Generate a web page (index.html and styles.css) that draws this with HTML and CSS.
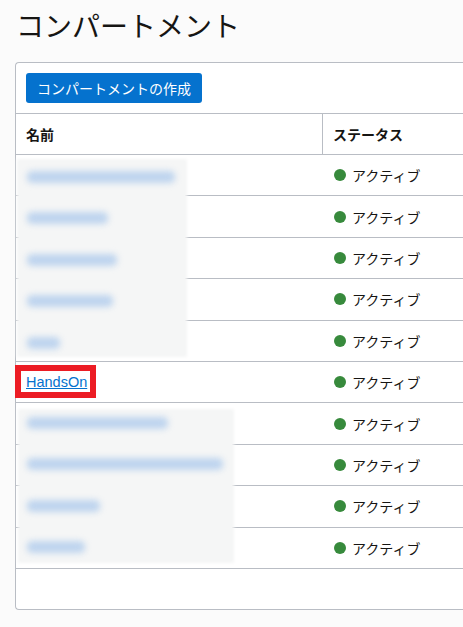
FILE: index.html
```html
<!DOCTYPE html>
<html lang="ja">
<head>
<meta charset="utf-8">
<title>コンパートメント</title>
<link rel="stylesheet" href="styles.css">
</head>
<body>
<div class="page">
  <h1 class="title">コンパートメント</h1>
  <div class="card">
    <div class="toolbar">
      <button class="btn">コンパートメントの作成</button>
    </div>
    <div class="table">
      <div class="thead">
        <div class="th th-name">名前</div>
        <div class="th th-status">ステータス</div>
      </div>
      <div class="row"><div class="name"></div><div class="status"><span class="dot"></span>アクティブ</div></div>
      <div class="row"><div class="name"></div><div class="status"><span class="dot"></span>アクティブ</div></div>
      <div class="row"><div class="name"></div><div class="status"><span class="dot"></span>アクティブ</div></div>
      <div class="row"><div class="name"></div><div class="status"><span class="dot"></span>アクティブ</div></div>
      <div class="row"><div class="name"></div><div class="status"><span class="dot"></span>アクティブ</div></div>
      <div class="row"><div class="name"><a class="link marked" href="#">HandsOn</a></div><div class="status"><span class="dot"></span>アクティブ</div></div>
      <div class="row"><div class="name"></div><div class="status"><span class="dot"></span>アクティブ</div></div>
      <div class="row"><div class="name"></div><div class="status"><span class="dot"></span>アクティブ</div></div>
      <div class="row"><div class="name"></div><div class="status"><span class="dot"></span>アクティブ</div></div>
      <div class="row"><div class="name"></div><div class="status"><span class="dot"></span>アクティブ</div></div>
      <div class="tfoot"></div>
    </div>
    <div class="mask mask-a">
      <span class="blur" style="width:148px"></span>
      <span class="blur" style="width:81px"></span>
      <span class="blur" style="width:90px"></span>
      <span class="blur" style="width:86px"></span>
      <span class="blur" style="width:33px"></span>
    </div>
    <div class="mask mask-b">
      <span class="blur" style="width:141px"></span>
      <span class="blur" style="width:196px"></span>
      <span class="blur" style="width:73px"></span>
      <span class="blur" style="width:58px"></span>
    </div>
  </div>
</div>
</body>
</html>
```
FILE: styles.css
```css
html, body {
  margin: 0;
  padding: 0;
}
body {
  background: #fbfbfb;
  overflow: hidden;
  font-family: "Noto Sans CJK JP", "Noto Sans", sans-serif;
  color: #161513;
}
.page {
  padding-left: 15px;
}
.title {
  margin: 0;
  padding: 5px 0 0 1px;
  font-size: 28px;
  line-height: 40px;
  font-weight: 400;
  color: #161513;
}
.card {
  position: relative;
  margin-top: 17px;
  background: #fff;
  border: 1px solid #b9bdc4;
  border-right: none;
  border-radius: 4px 0 0 4px;
}
.toolbar {
  padding: 10px;
  display: flex;
}
.btn {
  height: 30px;
  padding: 0 11px;
  border: none;
  border-radius: 3px;
  background: #0572ce;
  color: #fff;
  font-family: "Noto Sans CJK JP", sans-serif;
  font-size: 14px;
  line-height: 30px;
}
.table {
  border-top: 1px solid #b9bdc4;
}
.thead {
  display: flex;
  height: 40px;
  border-bottom: 1px solid #b9bdc4;
}
.th {
  display: flex;
  align-items: center;
  font-size: 14px;
  font-weight: 700;
}
.th-name {
  width: 296px;
  padding-left: 10px;
  border-right: 1px solid #b9bdc4;
}
.th-status {
  padding-left: 10px;
}
.row {
  display: flex;
  align-items: center;
  height: 40.4px;
  border-bottom: 1px solid #b9bdc4;
}
.name {
  width: 296px;
  padding-left: 10px;
  display: flex;
  align-items: center;
}
.status {
  display: flex;
  align-items: center;
  padding-left: 12px;
  font-size: 14px;
  line-height: 20px;
}
.dot {
  width: 12px;
  height: 12px;
  border-radius: 50%;
  background: #378a3c;
  margin-right: 6px;
}
.link {
  font-family: "Liberation Sans", Arial, sans-serif;
  font-size: 14.5px;
  line-height: 17px;
  color: #0572ce;
  text-decoration: underline;
}
.marked {
  position: relative;
  display: inline-block;
}
.marked::after {
  content: "";
  position: absolute;
  top: -8.5px;
  bottom: -7.5px;
  left: -11px;
  right: -9px;
  border: 6px solid #ec1c24;
}
.tfoot {
  height: 40px;
}
.mask {
  position: absolute;
  display: flex;
  flex-direction: column;
  background: #f5f6f6;
  box-shadow: 0 0 3px 2px #f5f6f6;
}
.mask-a {
  left: 3px;
  top: 98px;
  width: 166px;
  height: 194px;
  padding: 10px 0 0 8px;
  box-sizing: border-box;
}
.mask-b {
  left: 4px;
  top: 348px;
  width: 212px;
  height: 150px;
  padding: 6px 0 0 7px;
  box-sizing: border-box;
}
.blur {
  display: block;
  height: 12px;
  margin-bottom: 29.4px;
  background: #bed4ee;
  border-radius: 5px;
  filter: blur(3px);
  flex: none;
}
```
